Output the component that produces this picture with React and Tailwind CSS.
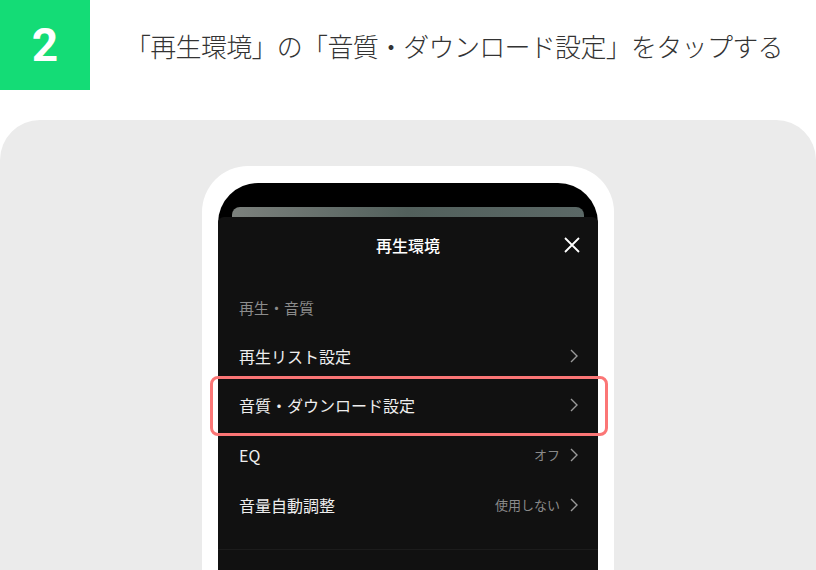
import React from "react";

const rows = [
  { label: "再生リスト設定" },
  { label: "音質・ダウンロード設定", hl: true },
  { label: "EQ", value: "オフ" },
  { label: "音量自動調整", value: "使用しない" },
];

const Chevron = () => (
  <svg width="8" height="14" viewBox="0 0 8 14" fill="none">
    <polyline points="1,1 7,7 1,13" stroke="#9a9a9a" strokeWidth="1.4" />
  </svg>
);

export default function App() {
  return (
    <div
      className="w-[816px] h-[570px] bg-white overflow-hidden"
      style={{ fontFamily: '"Noto Sans CJK JP", "Noto Sans", sans-serif' }}
    >
      {/* step header */}
      <div className="flex items-center h-[90px]">
        <div
          className="w-[90px] h-[90px] bg-[#14dc76] flex items-center justify-center text-white text-[46px] font-bold leading-none"
          style={{ fontFamily: "Roboto, sans-serif" }}
        >
          2
        </div>
        <div className="ml-[35px] text-[26px] font-light text-[#333333] tracking-[-0.7px]">
          「再生環境」の「音質・ダウンロード設定」をタップする
        </div>
      </div>

      {/* grey panel */}
      <div className="mt-[30px] h-[450px] bg-[#ebebeb] rounded-t-[40px] overflow-hidden flex justify-center pt-[46px]">
        <div className="w-[412px] bg-white rounded-t-[46px] pt-[17px] px-[16px] h-[500px]">
          <div className="bg-black rounded-t-[40px] h-[480px] pt-[24px] flex flex-col">
            <div className="mx-[14px] h-[10px] rounded-t-[8px] bg-gradient-to-r from-[#7c817d] via-[#52605c] to-[#5b6866]" />
            <div className="flex-1 bg-[#111111] rounded-t-[6px]">
              {/* sheet header */}
              <div className="relative h-[56px] flex items-center justify-center">
                <span className="text-white text-[16px] font-medium">再生環境</span>
                <svg
                  className="absolute right-[18px] top-[20px]"
                  width="16"
                  height="16"
                  viewBox="0 0 16 16"
                  fill="none"
                >
                  <path d="M1 1L15 15M15 1L1 15" stroke="#ffffff" strokeWidth="1.8" />
                </svg>
              </div>
              <div className="h-[58px] pt-[25px] pl-[21px] text-[15px] leading-[20px] text-[#8c8c8c]">
                再生・音質
              </div>
              {rows.map((r) => (
                <div
                  key={r.label}
                  className="relative h-[49.6px] flex items-center pl-[21px] pr-[20px]"
                >
                  <span className="text-[16px] text-[#eeeeee]">{r.label}</span>
                  <div className="ml-auto flex items-center gap-[10px]">
                    {r.value && (
                      <span className="text-[13px] text-[#8a8a8a]">{r.value}</span>
                    )}
                    <Chevron />
                  </div>
                  {r.hl && (
                    <div className="absolute -left-[8px] -right-[10px] -top-[5px] -bottom-[6px] border-[3px] border-[#fb7676] rounded-[8px]" />
                  )}
                </div>
              ))}
              <div className="mt-[20px] border-t border-[#1c1c1c]" />
            </div>
          </div>
        </div>
      </div>
    </div>
  );
}
